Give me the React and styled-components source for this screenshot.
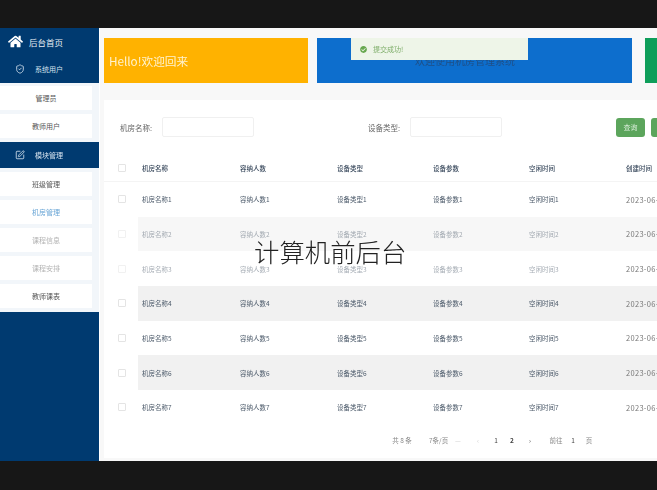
import React from 'react';
import styled, { createGlobalStyle } from 'styled-components';
import { FaHome, FaCheckCircle } from 'react-icons/fa';
import { ShieldCheck, SquarePen } from 'lucide-react';

const GlobalStyle = createGlobalStyle`
  html, body {
    margin: 0;
    width: 657px;
    height: 490px;
    overflow: hidden;
    background: #171717;
    font-family: "Noto Sans CJK SC", "Liberation Sans", sans-serif;
  }
`;

const rows = [1, 2, 3, 4, 5, 6, 7];

function Row({ n }) {
  return (
    <TableRow $grey={n % 2 === 0} $faded={n === 2 || n === 3}>
      <CheckCell><Check /></CheckCell>
      <Cell>机房名称{n}</Cell>
      <Cell>容纳人数{n}</Cell>
      <Cell>设备类型{n}</Cell>
      <Cell>设备参数{n}</Cell>
      <Cell>空闲时间{n}</Cell>
      <DateCell>2023-06-</DateCell>
    </TableRow>
  );
}

function App() {
  return (
    <Frame>
      <GlobalStyle />
      <BlackBar />
      <Body>
        <Sidebar>
          <HomeItem><FaHome size={15} color="#fff" /><span>后台首页</span></HomeItem>
          <GroupItem $height={28}><ShieldCheck size={10} /><span>系统用户</span></GroupItem>
          <SubList $top={3}>
            <SubItem>管理员</SubItem>
            <SubItem>教师用户</SubItem>
          </SubList>
          <GroupItem $height={26}><SquarePen size={10} /><span>模块管理</span></GroupItem>
          <SubList $top={4}>
            <SubItem>班级管理</SubItem>
            <SubItem $color="#6aa6d6">机房管理</SubItem>
            <SubItem $color="#b4b4b4">课程信息</SubItem>
            <SubItem $color="#b4b4b4">课程安排</SubItem>
            <SubItem>教师课表</SubItem>
          </SubList>
        </Sidebar>
        <Main>
          <Banners>
            <YellowCard>Hello!欢迎回来</YellowCard>
            <BlueCard>欢迎使用机房管理系统</BlueCard>
            <GreenCard />
          </Banners>
          <Panel>
            <FilterBar>
              <Label>机房名称:</Label>
              <Input />
              <Label $left={114}>设备类型:</Label>
              <Input />
              <Buttons>
                <GreenButton>查询</GreenButton>
                <GreenButton>重置</GreenButton>
              </Buttons>
            </FilterBar>
            <HeaderRow>
              <CheckCell><Check /></CheckCell>
              <Cell>机房名称</Cell>
              <Cell>容纳人数</Cell>
              <Cell>设备类型</Cell>
              <Cell>设备参数</Cell>
              <Cell>空闲时间</Cell>
              <Cell>创建时间</Cell>
            </HeaderRow>
            {rows.map((n) => <Row key={n} n={n} />)}
            <Pager>
              <PagerItem $width={20}>共 8 条</PagerItem>
              <PagerItem $left={17} $width={17}>7条/页</PagerItem>
              <PagerItem $left={7} $width={10} $muted>—</PagerItem>
              <PagerItem $left={10} $width={10} $muted>‹</PagerItem>
              <PagerItem $left={9} $width={8} $dark>1</PagerItem>
              <PagerItem $left={8} $width={8} $dark $bold>2</PagerItem>
              <PagerItem $left={10} $width={8} $dark>›</PagerItem>
              <PagerItem $left={15} $width={14}>前往</PagerItem>
              <PagerItem $left={6} $width={8} $dark>1</PagerItem>
              <PagerItem $left={8} $width={8}>页</PagerItem>
            </Pager>
          </Panel>
        </Main>
      </Body>
      <BlackBar $height={29} />
      <Toast><FaCheckCircle size={7} color="#67a84f" /><span>提交成功!</span></Toast>
      <Caption>计算机前后台</Caption>
    </Frame>
  );
}

const Frame = styled.div`
  position: relative;
  width: 657px;
  height: 490px;
  overflow: hidden;
  display: flex;
  flex-direction: column;
`;

const BlackBar = styled.div`
  flex: none;
  height: ${(p) => p.$height || 28}px;
  background: #171717;
`;

const Body = styled.div`
  flex: 1;
  min-height: 0;
  display: flex;
  background: #f8f8f8;
  filter: blur(0.5px);
`;

const Sidebar = styled.aside`
  flex: none;
  width: 99px;
  background: #003a70;
  display: flex;
  flex-direction: column;
`;

const HomeItem = styled.div`
  height: 27px;
  padding-left: 8px;
  display: flex;
  align-items: center;
  gap: 6px;
  color: #e8eef4;
  font-size: 8.5px;
`;

const GroupItem = styled.div`
  height: ${(p) => p.$height}px;
  padding-left: 15px;
  display: flex;
  align-items: center;
  gap: 10px;
  background: #003a70;
  color: #d5e2ee;
  font-size: 7px;
`;

const SubList = styled.div`
  background: #f2f6fa;
  padding: ${(p) => p.$top}px 0 4px;
  display: flex;
  flex-direction: column;
  gap: 4px;
`;

const SubItem = styled.div`
  width: 92px;
  height: 24px;
  background: #fff;
  color: ${(p) => p.$color || '#555'};
  font-size: 7px;
  display: flex;
  align-items: center;
  justify-content: center;
`;

const Main = styled.main`
  flex: 1;
  min-width: 0;
  padding: 10px 0 3px 4px;
  display: flex;
  flex-direction: column;
  gap: 17px;
  border-left: 1px solid #fff;
`;

const Banners = styled.div`
  flex: none;
  height: 45px;
  display: flex;
`;

const YellowCard = styled.div`
  flex: none;
  width: 204px;
  background: #ffb200;
  color: #fff3cf;
  font-size: 11.7px;
  padding-left: 5px;
  display: flex;
  align-items: center;
  box-sizing: border-box;
`;

const BlueCard = styled.div`
  flex: none;
  width: 315px;
  margin-left: 9px;
  background: #0d6ecd;
  color: #1f4f86;
  font-size: 10px;
  padding-left: 98px;
  box-sizing: border-box;
  display: flex;
  align-items: center;
`;

const GreenCard = styled.div`
  flex: none;
  width: 40px;
  margin-left: 13px;
  background: #0e9e5a;
`;

const Panel = styled.section`
  flex: 1;
  background: #fff;
  min-height: 0;
`;

const FilterBar = styled.div`
  height: 20px;
  margin-top: 17px;
  padding-left: 16px;
  display: flex;
  align-items: center;
`;

const Label = styled.label`
  flex: none;
  width: 42px;
  margin-left: ${(p) => p.$left || 0}px;
  color: #666;
  font-size: 7.5px;
`;

const Input = styled.div`
  flex: none;
  width: 90px;
  height: 18px;
  border: 1px solid #f0f0f0;
  border-radius: 2px;
  background: #fff;
`;

const Buttons = styled.div`
  margin-left: 114px;
  display: flex;
  gap: 6px;
`;

const GreenButton = styled.div`
  flex: none;
  width: 29px;
  height: 19px;
  border-radius: 3px;
  background: #5ca55c;
  color: #d6ecd6;
  font-size: 7px;
  display: flex;
  align-items: center;
  justify-content: center;
`;

const columns = '34px 98px 97px 96px 96px 97px 60px';

const HeaderRow = styled.div`
  margin-top: 18px;
  height: 27px;
  display: grid;
  grid-template-columns: ${columns};
  align-items: center;
  color: #36465a;
  font-size: 6.5px;
  font-weight: 500;
  border-bottom: 1px solid #f4f4f4;
  box-sizing: border-box;
`;

const rowColor = (p) => {
  if (!p.$grey) return '#fff';
  return p.$faded ? '#f7f7f7' : '#f1f1f1';
};

const TableRow = styled.div`
  height: 34.67px;
  display: grid;
  grid-template-columns: ${columns};
  align-items: center;
  color: #4c5a6a;
  font-size: 6.5px;
  background: linear-gradient(to right, #fff 34px, ${rowColor} 34px);

  & > div:not(:last-child) {
    opacity: ${(p) => (p.$faded ? 0.5 : 1)};
  }
`;

const CheckCell = styled.div`
  padding-left: 14px;
`;

const Check = styled.div`
  width: 6px;
  height: 6px;
  border: 1px solid #e4e4e4;
  border-radius: 1px;
`;

const Cell = styled.div`
  padding-left: 4px;
  white-space: nowrap;
`;

const DateCell = styled(Cell)`
  color: #777;
  font-size: 7.5px;
  letter-spacing: 0.3px;
`;

const Pager = styled.div`
  height: 30px;
  padding-left: 288px;
  display: flex;
  align-items: center;
  color: #888;
  font-size: 6.5px;
`;

const PagerItem = styled.span`
  flex: none;
  width: ${(p) => p.$width}px;
  margin-left: ${(p) => p.$left || 0}px;
  text-align: center;
  white-space: nowrap;
  color: ${(p) => (p.$muted ? '#ccc' : p.$dark ? '#444' : '#888')};
  font-weight: ${(p) => (p.$bold ? 700 : 400)};
`;

const Toast = styled.div`
  position: absolute;
  left: 351px;
  top: 38px;
  width: 177px;
  height: 22px;
  box-sizing: border-box;
  padding-left: 9px;
  background: #eef5e8;
  color: #7fae6a;
  font-size: 7px;
  display: flex;
  align-items: center;
  gap: 6px;
  filter: blur(0.4px);
`;

const Caption = styled.div`
  position: absolute;
  left: 254px;
  top: 233px;
  color: #222;
  font-size: 25.4px;
  font-weight: 200;
  line-height: 36px;
  white-space: nowrap;
`;

export default App;
